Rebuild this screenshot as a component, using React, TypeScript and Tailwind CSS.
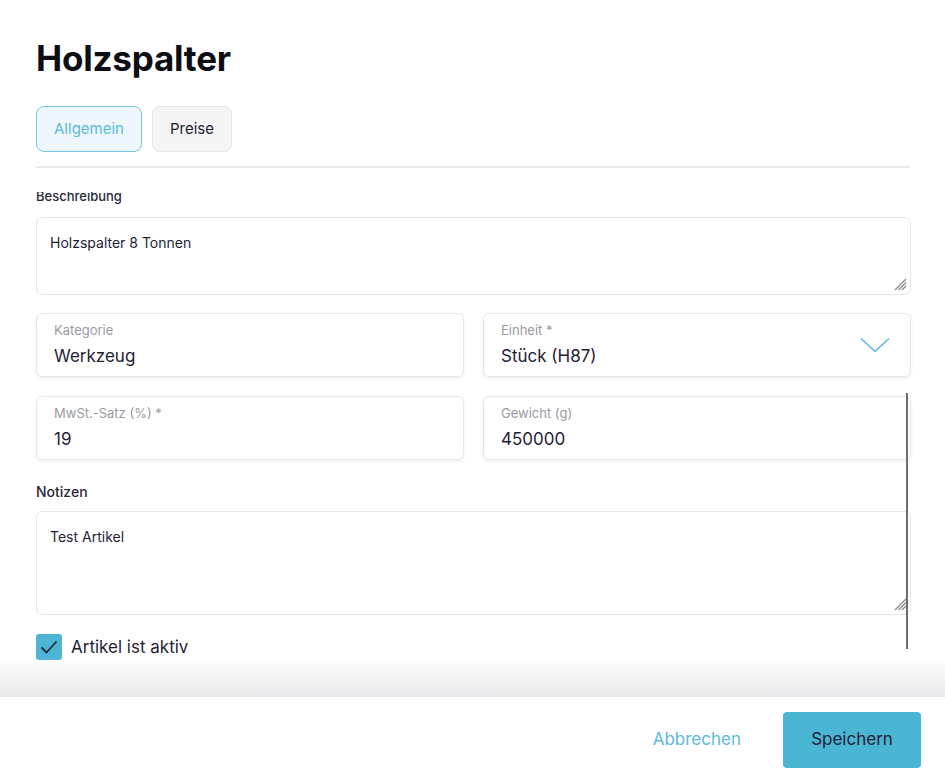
import React from "react";

const font = { fontFamily: "Inter, 'Noto Sans', sans-serif" };

function ResizeHandle() {
  return (
    <svg className="absolute right-[3px] bottom-[3px]" width="14" height="14" viewBox="0 0 14 14">
      <g stroke="#8a8a8a" strokeWidth="1.2">
        <line x1="2" y1="13" x2="13" y2="2" />
        <line x1="5.5" y1="13" x2="13" y2="5.5" />
        <line x1="9" y1="13" x2="13" y2="9" />
      </g>
    </svg>
  );
}

function Field({ label, value, chevron }: { label: string; value: string; chevron?: boolean }) {
  return (
    <div className="relative flex-1 h-[64px] rounded-[6px] border border-[#e6e7ea] bg-white shadow-[0_2px_4px_rgba(0,0,0,0.06)] px-[17px] pt-[8px]">
      <div className="text-[13px] leading-[16px] text-[#9a9aa3]">{label}</div>
      <div className="mt-[7px] text-[17px] leading-[22px] text-[#1f1d36]">{value}</div>
      {chevron && (
        <svg className="absolute right-[20px] top-[23px]" width="30" height="16" viewBox="0 0 30 16">
          <polyline points="1,1.5 15,14.5 29,1.5" fill="none" stroke="#5bbbd8" strokeWidth="1.6" />
        </svg>
      )}
    </div>
  );
}

export default function App() {
  return (
    <div className="w-[945px] h-[778px] bg-white flex flex-col overflow-hidden text-[#1f1d36]" style={font}>
      <div className="px-[36px] pt-[38px]">
        <h1 className="text-[35px] leading-[40px] font-bold text-[#0d0d14] tracking-[-0.2px]">Holzspalter</h1>
        <div className="mt-[28px] flex gap-[10px]">
          <button className="h-[46px] w-[106px] rounded-[8px] border border-[#78c6dd] bg-[#eef6fe] text-[15px] text-[#5bbbd8]">
            Allgemein
          </button>
          <button className="h-[46px] w-[80px] rounded-[8px] border border-[#e8e8e8] bg-[#f5f5f5] text-[15px] text-[#1f1d36]">
            Preise
          </button>
        </div>
        <div className="mt-[14px] h-[2px] w-[875px] bg-[#ebebeb]" />
      </div>

      <div className="relative flex-1 overflow-hidden mt-[24px]">
        <div className="pl-[36px] pr-[34px] -mt-[4px]">
          <div className="text-[13px] leading-[16px] font-medium text-[#2a2838]">Beschreibung</div>
          <div className="relative mt-[13px] h-[78px] rounded-[6px] border border-[#e6e7ea] px-[13px] pt-[15px] text-[14px] leading-[20px]">
            Holzspalter 8 Tonnen
            <ResizeHandle />
          </div>
          <div className="mt-[18px] flex gap-[19px]">
            <Field label="Kategorie" value="Werkzeug" />
            <Field label="Einheit *" value="Stück (H87)" chevron />
          </div>
          <div className="mt-[19px] flex gap-[19px]">
            <Field label="MwSt.-Satz (%) *" value="19" />
            <Field label="Gewicht (g)" value="450000" />
          </div>
          <div className="mt-[24px] text-[14px] leading-[16px] font-medium text-[#2a2838]">Notizen</div>
          <div className="relative mt-[11px] h-[104px] rounded-[6px] border border-[#e6e7ea] px-[13px] pt-[15px] text-[14px] leading-[20px]">
            Test Artikel
            <ResizeHandle />
          </div>
          <div className="mt-[19px] flex items-center gap-[9px]">
            <div className="w-[26px] h-[26px] rounded-[3px] bg-[#4cb5d3] flex items-center justify-center">
              <svg width="18" height="14" viewBox="0 0 18 14">
                <polyline points="1.5,7.5 6.5,12.5 16.5,1.5" fill="none" stroke="#1f2a3a" strokeWidth="1.8" />
              </svg>
            </div>
            <span className="text-[17px] leading-[22px]">Artikel ist aktiv</span>
          </div>
        </div>
        <div className="absolute left-[906px] top-[201px] w-[2px] h-[256px] bg-[#6e6e6e]" />
        <div className="absolute left-0 right-0 bottom-0 h-[40px] bg-gradient-to-b from-[rgba(235,235,237,0)] to-[#e9e9eb]" />
      </div>

      <div className="h-[81px] shrink-0 bg-white flex items-center justify-end pr-[24px] pt-[4px] gap-[42px]">
        <button className="text-[17px] text-[#5bbbd8]">Abbrechen</button>
        <button className="h-[56px] w-[138px] rounded-[4px] bg-[#4bb5d4] text-[17px] text-[#1f1d36]">Speichern</button>
      </div>
    </div>
  );
}
